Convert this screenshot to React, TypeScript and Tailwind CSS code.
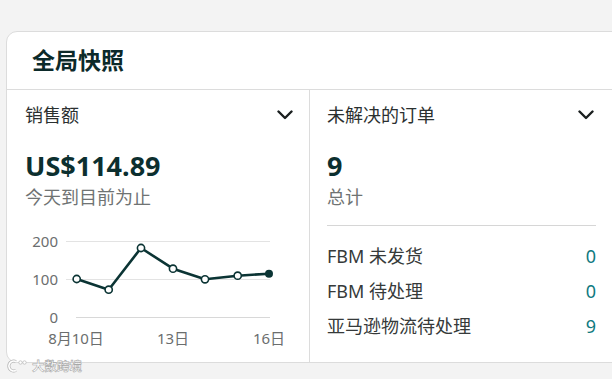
import React from "react";

const Chevron = () => (
  <svg width="16" height="10" viewBox="0 0 16 10" className="block">
    <path d="M1.5 1.5 L8 8 L14.5 1.5" fill="none" stroke="#1a1f1f" strokeWidth="2.4" strokeLinecap="round" strokeLinejoin="round" />
  </svg>
);

const pts: [number, number][] = [
  [69.7, 54],
  [101.7, 64.7],
  [134, 23],
  [166, 43.7],
  [198, 54.3],
  [230.7, 50.7],
  [262, 48.7],
];

const Chart = () => (
  <svg width="302" height="126" viewBox="0 0 302 126" className="block mt-[16px]">
    <line x1="59" y1="16.5" x2="263" y2="16.5" stroke="#e3e3e3" strokeWidth="1" />
    <line x1="59" y1="54.5" x2="263" y2="54.5" stroke="#e3e3e3" strokeWidth="1" />
    <line x1="69" y1="92.5" x2="263" y2="92.5" stroke="#d8d8d8" strokeWidth="1" />
    <g fill="#6b6e6e" fontSize="15" fontFamily="'Noto Sans', 'Noto Sans CJK SC', sans-serif">
      <text x="51" y="21.5" textAnchor="end">200</text>
      <text x="51" y="59.5" textAnchor="end">100</text>
      <text x="51" y="97.5" textAnchor="end">0</text>
      <text x="69" y="118.5" textAnchor="middle">8月10日</text>
      <text x="166" y="118.5" textAnchor="middle">13日</text>
      <text x="262" y="118.5" textAnchor="middle">16日</text>
    </g>
    <polyline
      points={pts.map((p) => p.join(",")).join(" ")}
      fill="none"
      stroke="#0b3434"
      strokeWidth="2.6"
      strokeLinejoin="round"
    />
    {pts.slice(0, 6).map((p, i) => (
      <circle key={i} cx={p[0]} cy={p[1]} r="3.6" fill="#ffffff" stroke="#0b3434" strokeWidth="1.6" />
    ))}
    <circle cx={262} cy={48.7} r="4" fill="#0b3434" />
  </svg>
);

export default function App() {
  return (
    <div className="relative w-[612px] h-[379px] overflow-hidden bg-[#f3f3f3] pt-[31px] pl-[6px] font-['Noto_Sans','Noto_Sans_CJK_SC',sans-serif]">
      <div className="w-[660px] bg-white border border-[#dcdcdc] rounded-l-[11px]">
        <div className="h-[58px] border-b border-[#dcdcdc] flex items-center pl-[25px]">
          <span className="text-[23px] font-bold text-[#0c2a2a] leading-none">全局快照</span>
        </div>
        <div className="flex h-[272px]">
          <div className="w-[303px] border-r border-[#dcdcdc]">
            <div className="pl-[18px] pr-[16px]">
              <div className="mt-[13px] h-[24px] flex items-center justify-between">
                <span className="text-[18px] leading-[24px] text-[#2b3030]">销售额</span>
                <Chevron />
              </div>
              <div className="mt-[22px] text-[27px] leading-[34px] font-bold text-[#0c2f2f]">US$114.89</div>
              <div className="mt-[2px] text-[18px] leading-[24px] text-[#6f7373]">今天到目前为止</div>
            </div>
            <Chart />
          </div>
          <div className="w-[303px] px-[17px]">
            <div className="mt-[13px] h-[24px] flex items-center justify-between">
              <span className="text-[18px] leading-[24px] text-[#2b3030]">未解决的订单</span>
              <span className="mr-[2px]">
                <Chevron />
              </span>
            </div>
            <div className="mt-[22px] text-[27px] leading-[34px] font-bold text-[#0c2f2f]">9</div>
            <div className="mt-[2px] text-[18px] leading-[24px] text-[#6f7373]">总计</div>
            <div className="mt-[16px] border-t border-[#d6d6d6]" />
            <div className="mt-[18px] flex flex-col gap-[11px] text-[18px] leading-[24px]">
              <div className="flex justify-between">
                <span className="text-[#363a3a]">FBM 未发货</span>
                <span className="text-[#0f7a80]">0</span>
              </div>
              <div className="flex justify-between">
                <span className="text-[#363a3a]">FBM 待处理</span>
                <span className="text-[#0f7a80]">0</span>
              </div>
              <div className="flex justify-between">
                <span className="text-[#363a3a]">亚马逊物流待处理</span>
                <span className="text-[#0f7a80]">9</span>
              </div>
            </div>
          </div>
        </div>
      </div>
      <div className="absolute left-[7px] top-[359px] flex items-center gap-[3px]">
        <svg width="22" height="14" viewBox="0 0 22 14">
          <path d="M9 2.5 A5 5 0 1 0 9 11.5" fill="none" stroke="#b4b4b4" strokeWidth="3" />
          <path d="M9 2.5 A5 5 0 1 0 9 11.5" fill="none" stroke="#ffffff" strokeWidth="1.6" />
          <circle cx="13.5" cy="3.5" r="1.7" fill="#fff" stroke="#b4b4b4" strokeWidth="0.7" />
          <circle cx="17.5" cy="3.5" r="1.7" fill="#fff" stroke="#b4b4b4" strokeWidth="0.7" />
        </svg>
        <span className="text-[12.5px] leading-none font-bold text-white [-webkit-text-stroke:0.6px_#a8a8a8] font-['Noto_Sans_CJK_SC',sans-serif]">大数跨境</span>
      </div>
    </div>
  );
}
